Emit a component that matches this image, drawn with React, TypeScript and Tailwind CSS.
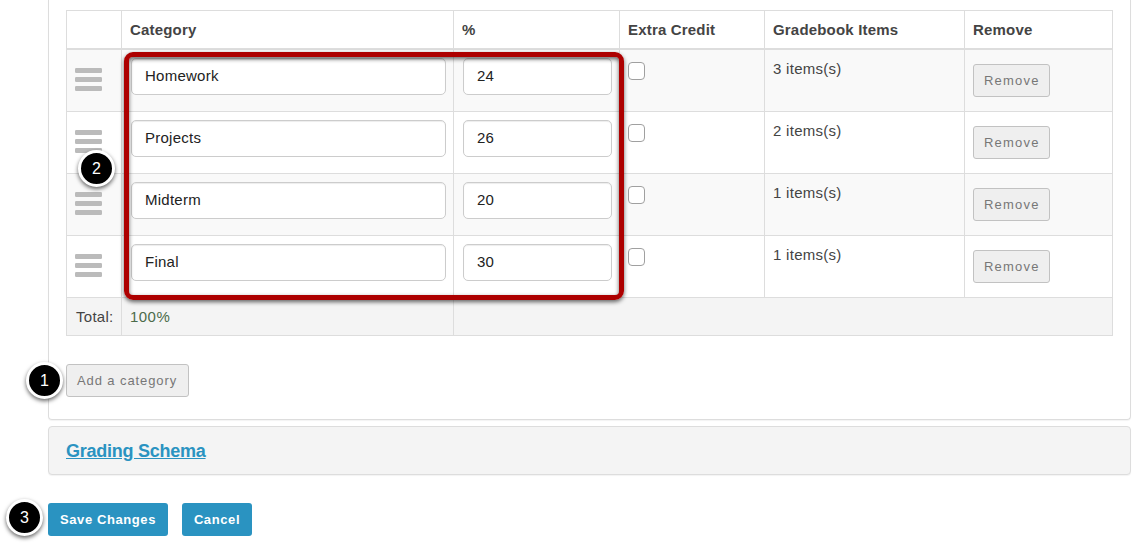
import React from "react";

type Category = { name: string; percent: number; items: number };

const categories: Category[] = [
  { name: "Homework", percent: 24, items: 3 },
  { name: "Projects", percent: 26, items: 2 },
  { name: "Midterm", percent: 20, items: 1 },
  { name: "Final", percent: 30, items: 1 },
];

const columns = "grid grid-cols-[55px_332px_166px_145px_200px_149px]";
const cell = "border-l border-[#ddd]";
const lastCell = "border-x border-[#ddd]";
const field =
  "block h-[37px] rounded-[5px] border border-[#ccc] bg-white px-[13px] pb-[3px] text-[15px] tracking-[0.25px] text-[#222] shadow-[inset_0_1px_1px_rgba(0,0,0,0.075)] outline-none";
const grayButton =
  "block h-[33px] rounded-[3px] border border-[#c2c2c2] bg-[#efefef] px-[10px] text-left text-[13px] whitespace-nowrap text-[#777]";
const blueButton =
  "h-[33px] rounded-[3px] bg-[#2a93c1] text-center text-[13px] font-bold tracking-[0.6px] whitespace-nowrap text-white";

function DragHandle() {
  return (
    <svg width="27" height="23" viewBox="0 0 27 23" fill="#bbb">
      <rect width="27" height="5" rx="1.2" />
      <rect y="9" width="27" height="5" rx="1.2" />
      <rect y="18" width="27" height="5" rx="1.2" />
    </svg>
  );
}

function Step({ n, className }: { n: number; className: string }) {
  return (
    <div
      className={`absolute flex h-[37px] w-[37px] items-center justify-center rounded-full border-[3px] border-white bg-black text-[16px] tracking-normal text-white shadow-[0_2px_4px_rgba(0,0,0,0.6)] ${className}`}
    >
      {n}
    </div>
  );
}

function CategoryRow({ category, striped }: { category: Category; striped: boolean }) {
  return (
    <div className={`${columns} h-[62px] border-b border-[#ddd] ${striped ? "bg-[#f9f9f9]" : "bg-white"}`}>
      <div className={`${cell} pt-[18px] pl-2`}>
        <DragHandle />
      </div>
      <div className={`${cell} pt-2 pl-[9px]`}>
        <input className={`${field} w-[315px]`} defaultValue={category.name} />
      </div>
      <div className={`${cell} pt-2 pl-[9px]`}>
        <input className={`${field} w-[149px]`} defaultValue={category.percent} />
      </div>
      <div className={`${cell} pt-3 pl-2`}>
        <input
          type="checkbox"
          className="block h-[18px] w-[17px] appearance-none rounded-[4px] border border-[#a0a0a0] bg-white"
        />
      </div>
      <div className={`${cell} pt-2 pl-2 leading-[22px]`}>{category.items} items(s)</div>
      <div className={`${lastCell} pt-[14px] pl-2`}>
        <button className={`${grayButton} w-[77px] tracking-[1.2px]`}>Remove</button>
      </div>
    </div>
  );
}

export default function App() {
  return (
    <div className="relative h-[543px] w-[1143px] overflow-hidden bg-white pl-12 font-['Liberation_Sans',Arial,sans-serif] text-[15px] tracking-[0.28px] text-[#444]">
      <section className="h-[420px] w-[1083px] rounded-b-[4px] border border-t-0 border-[#ddd] pt-[10px] pl-[17px] shadow-[0_1px_1px_rgba(0,0,0,0.05)]">
        <div className="w-[1047px]">
          <div className={`${columns} h-10 border-t border-b-2 border-[#ddd] leading-[38px] font-bold tracking-[0.18px]`}>
            <div className={cell} />
            <div className={`${cell} pl-2`}>Category</div>
            <div className={`${cell} pl-2`}>%</div>
            <div className={`${cell} pl-2`}>Extra Credit</div>
            <div className={`${cell} pl-2`}>Gradebook Items</div>
            <div className={`${lastCell} pl-2`}>Remove</div>
          </div>
          {categories.map((category, i) => (
            <CategoryRow key={category.name} category={category} striped={i % 2 === 0} />
          ))}
          <div className="grid h-[38px] grid-cols-[55px_332px_660px] border-b border-[#ddd] bg-[#f4f4f4] leading-[37px]">
            <div className={`${cell} pl-[9px]`}>Total:</div>
            <div className={`${cell} pl-2 tracking-[0.45px] text-[#4c6b4a]`}>100%</div>
            <div className={lastCell} />
          </div>
        </div>
        <button className={`${grayButton} mt-7 w-[123px] tracking-[0.9px]`}>Add a category</button>
      </section>

      <section className="mt-[6px] flex h-[49px] w-[1083px] items-center rounded-[4px] border border-[#ddd] bg-[#f4f4f4] pt-px pl-[17px] shadow-[0_1px_1px_rgba(0,0,0,0.05)]">
        <a className="text-[18px] font-bold tracking-[-0.25px] text-[#2a93c1] underline">Grading Schema</a>
      </section>

      <div className="mt-7 flex gap-[14px]">
        <button className={`${blueButton} w-[120px]`}>Save Changes</button>
        <button className={`${blueButton} w-[70px]`}>Cancel</button>
      </div>

      <div className="pointer-events-none absolute top-[52px] left-[124px] h-[248px] w-[500px] rounded-[9px] border-[5px] border-[#ad0000] shadow-[0_2px_4px_rgba(0,0,0,0.6),inset_0_2px_4px_rgba(0,0,0,0.6)]" />
      <Step n={1} className="top-[362px] left-[26px]" />
      <Step n={2} className="top-[150px] left-[78px]" />
      <Step n={3} className="top-[499px] left-[6px]" />
    </div>
  );
}
